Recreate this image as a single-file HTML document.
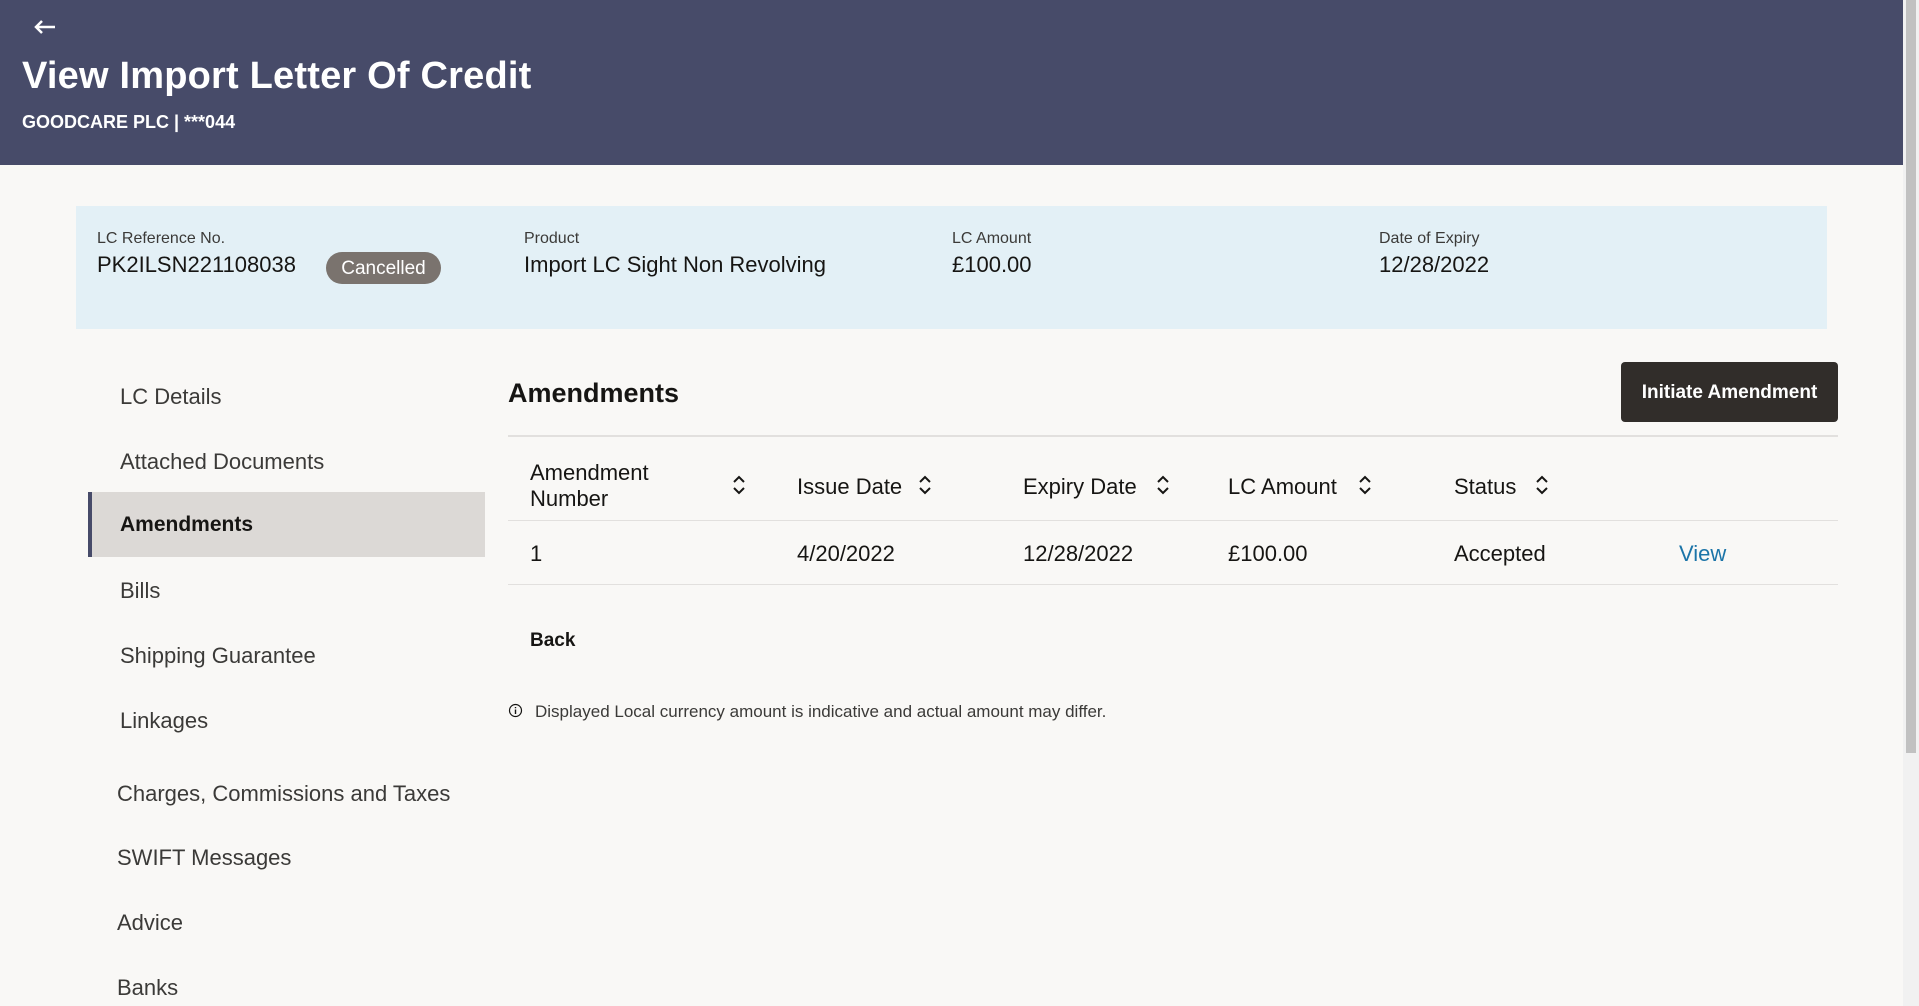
<!DOCTYPE html>
<html><head><meta charset="utf-8"><style>
*{margin:0;padding:0;box-sizing:border-box}
body{width:1919px;height:1006px;overflow:hidden;background:#f9f8f6;font-family:"Liberation Sans",sans-serif;color:#161513;position:relative}
.a{position:absolute;white-space:nowrap}
.hdr{position:absolute;left:0;top:0;width:1903px;height:165px;background:#474b69}
.sb{position:absolute;left:1903px;top:0;width:16px;height:1006px;background:#f1f1f1}
.sbt{position:absolute;left:1906px;top:0;width:10px;height:753px;background:#c1c1c1}
.lbl{font-size:16px;color:#3b3a38}
.val{font-size:22px}
.nav{font-size:22px;color:#3b3a38}
.th{font-size:22px;line-height:26px}
.td{font-size:22px}
</style></head><body>
<div class="hdr"></div>
<div class="sb"></div><div class="sbt"></div>
<svg class="a" style="left:33px;top:19px" width="24" height="16" viewBox="0 0 24 16"><path d="M22 8H3M9 2L3 8l6 6" fill="none" stroke="#fff" stroke-width="2.5"/></svg>
<div class="a" style="left:22px;top:55px;font-size:38px;font-weight:bold;color:#fff;letter-spacing:0.2px">View Import Letter Of Credit</div>
<div class="a" style="left:22px;top:112px;font-size:18px;font-weight:bold;color:#fff">GOODCARE PLC | ***044</div>

<div class="a" style="left:76px;top:206px;width:1751px;height:123px;background:#e3f0f6"></div>
<div class="a lbl" style="left:97px;top:230px">LC Reference No.</div>
<div class="a val" style="left:97px;top:252px">PK2ILSN221108038</div>
<div class="a" style="left:326px;top:252px;width:115px;height:32px;border-radius:16px;background:#7a736e;color:#fff;font-size:19px;text-align:center;line-height:33px">Cancelled</div>
<div class="a lbl" style="left:524px;top:230px">Product</div>
<div class="a val" style="left:524px;top:252px">Import LC Sight Non Revolving</div>
<div class="a lbl" style="left:952px;top:230px">LC Amount</div>
<div class="a val" style="left:952px;top:252px">£100.00</div>
<div class="a lbl" style="left:1379px;top:230px">Date of Expiry</div>
<div class="a val" style="left:1379px;top:252px">12/28/2022</div>

<div class="a" style="left:88px;top:492px;width:397px;height:65px;background:#dcd9d6;border-left:4px solid #474b69"></div>
<div class="a nav" style="left:120px;top:384px">LC Details</div>
<div class="a nav" style="left:120px;top:449px">Attached Documents</div>
<div class="a nav" style="left:120px;top:513px;color:#161513;font-weight:bold;font-size:21px">Amendments</div>
<div class="a nav" style="left:120px;top:578px">Bills</div>
<div class="a nav" style="left:120px;top:643px">Shipping Guarantee</div>
<div class="a nav" style="left:120px;top:708px">Linkages</div>
<div class="a nav" style="left:117px;top:781px">Charges, Commissions and Taxes</div>
<div class="a nav" style="left:117px;top:845px">SWIFT Messages</div>
<div class="a nav" style="left:117px;top:910px">Advice</div>
<div class="a nav" style="left:117px;top:975px">Banks</div>

<div class="a" style="left:508px;top:378px;font-size:27px;font-weight:bold">Amendments</div>
<div class="a" style="left:1621px;top:362px;width:217px;height:60px;background:#312d2a;border-radius:4px;color:#fff;font-size:19px;font-weight:bold;text-align:center;line-height:62px">Initiate Amendment</div>
<div class="a" style="left:508px;top:435px;width:1330px;height:2px;background:#e2e0de"></div>

<div class="a th" style="left:530px;top:460px">Amendment<br>Number</div>
<div class="a th" style="left:797px;top:474px">Issue Date</div>
<div class="a th" style="left:1023px;top:474px">Expiry Date</div>
<div class="a th" style="left:1228px;top:474px">LC Amount</div>
<div class="a th" style="left:1454px;top:474px">Status</div>
<svg class="a" style="left:732px;top:474px" width="14" height="22" viewBox="0 0 14 22"><path d="M2 8l5-5 5 5M2 14l5 5 5-5" fill="none" stroke="#161513" stroke-width="2"/></svg>
<svg class="a" style="left:918px;top:474px" width="14" height="22" viewBox="0 0 14 22"><path d="M2 8l5-5 5 5M2 14l5 5 5-5" fill="none" stroke="#161513" stroke-width="2"/></svg>
<svg class="a" style="left:1156px;top:474px" width="14" height="22" viewBox="0 0 14 22"><path d="M2 8l5-5 5 5M2 14l5 5 5-5" fill="none" stroke="#161513" stroke-width="2"/></svg>
<svg class="a" style="left:1358px;top:474px" width="14" height="22" viewBox="0 0 14 22"><path d="M2 8l5-5 5 5M2 14l5 5 5-5" fill="none" stroke="#161513" stroke-width="2"/></svg>
<svg class="a" style="left:1535px;top:474px" width="14" height="22" viewBox="0 0 14 22"><path d="M2 8l5-5 5 5M2 14l5 5 5-5" fill="none" stroke="#161513" stroke-width="2"/></svg>
<div class="a" style="left:508px;top:520px;width:1330px;height:1px;background:#e2e0de"></div>
<div class="a td" style="left:530px;top:541px">1</div>
<div class="a td" style="left:797px;top:541px">4/20/2022</div>
<div class="a td" style="left:1023px;top:541px">12/28/2022</div>
<div class="a td" style="left:1228px;top:541px">£100.00</div>
<div class="a td" style="left:1454px;top:541px">Accepted</div>
<div class="a td" style="left:1679px;top:541px;color:#1b74a8">View</div>
<div class="a" style="left:508px;top:584px;width:1330px;height:1px;background:#e2e0de"></div>

<div class="a" style="left:530px;top:630px;font-size:19px;font-weight:bold">Back</div>
<svg class="a" style="left:508px;top:703px" width="15" height="15" viewBox="0 0 15 15"><circle cx="7.5" cy="7.5" r="6" fill="none" stroke="#161513" stroke-width="1.2"/><path d="M7.5 6.5v4.5M7.5 4v1.2" stroke="#161513" stroke-width="1.4"/></svg>
<div class="a" style="left:535px;top:702px;font-size:17px;color:#3b3a38">Displayed Local currency amount is indicative and actual amount may differ.</div>
</body></html>
